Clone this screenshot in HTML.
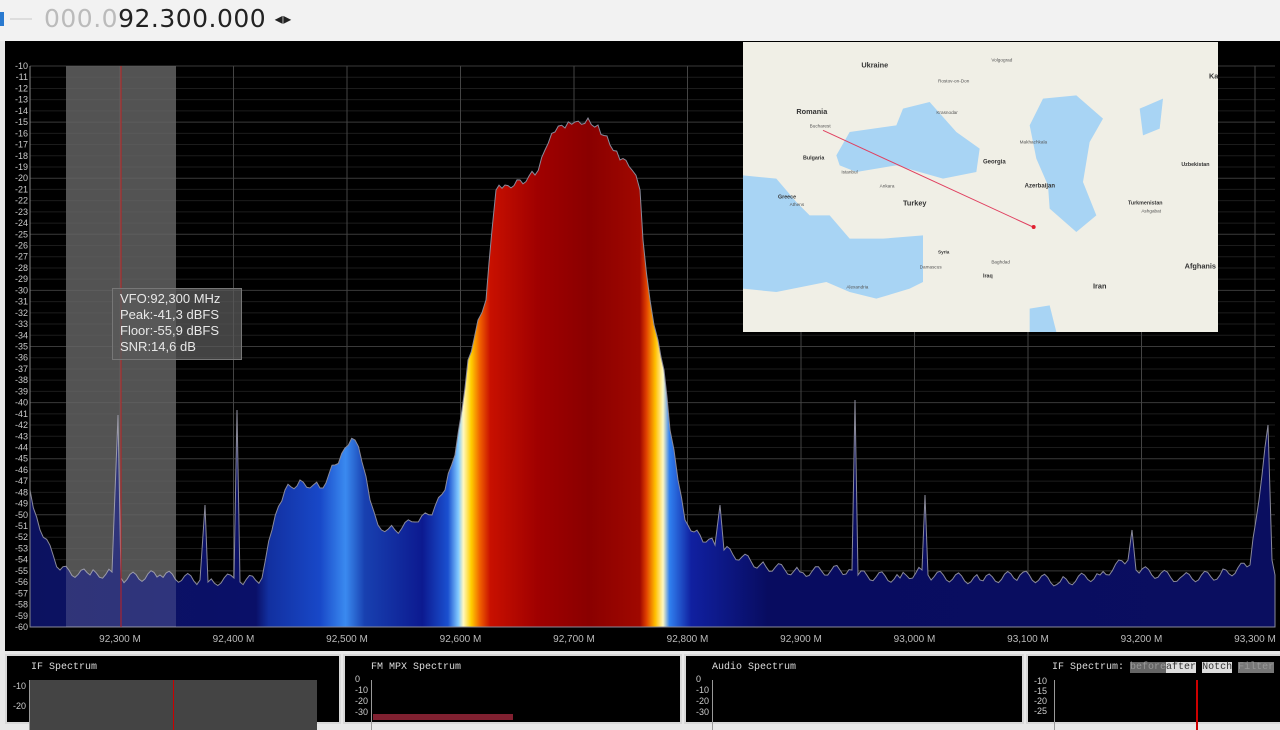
<!DOCTYPE html>
<html><head><meta charset="utf-8">
<style>
*{margin:0;padding:0;box-sizing:border-box}
body{width:1280px;height:720px;overflow:hidden;background:#e8e8e8;font-family:"Liberation Sans",sans-serif;position:relative}
.top{position:absolute;left:0;top:0;width:1280px;height:41px;background:#f2f2f2}
.freq{position:absolute;left:44px;top:4px;font-size:25px;letter-spacing:0.5px;color:#222;font-family:"DejaVu Sans","Liberation Sans",sans-serif}
.freq span{color:#bbb}
.main{position:absolute;left:5px;top:41px;width:1275px;height:610px;background:#000}
.panel{position:absolute;top:654px;height:70px;background:#000;border:2px solid #d8d8d8}
.ptitle{position:absolute;color:#ddd;font-family:"Liberation Mono",monospace;font-size:10px}
.tip{position:absolute;left:112px;top:288px;width:130px;height:72px;background:rgba(90,90,90,0.75);border:1px solid #777;color:#e8e8e8;font-size:13px;line-height:16px;padding:2px 7px}
.map{position:absolute;left:743px;top:42px;width:475px;height:290px}
</style></head><body>
<div class="top">
<div style="position:absolute;left:0;top:12px;width:4px;height:14px;background:#2a7ad0"></div>
<div style="position:absolute;left:10px;top:18px;width:22px;height:2px;background:#ddd"></div>
<div class="freq"><span>000.0</span>92.300.000 <b style="font-size:16px;vertical-align:3px">◂▸</b></div>
</div>
<div class="main"></div>
<svg style="position:absolute;left:0;top:0" width="1280" height="660">
<defs>
<linearGradient id="g" x1="0" x2="1280" gradientUnits="userSpaceOnUse">
<stop offset="0.02" stop-color="#0c1260"/>
<stop offset="0.2" stop-color="#0a1068"/>
<stop offset="0.21" stop-color="#1230a0"/>
<stop offset="0.25" stop-color="#1848c8"/>
<stop offset="0.27" stop-color="#3a8af0"/>
<stop offset="0.285" stop-color="#1840b0"/>
<stop offset="0.33" stop-color="#0c1a90"/>
<stop offset="0.35" stop-color="#1a50d0"/>
<stop offset="0.358" stop-color="#80c8ff"/>
<stop offset="0.362" stop-color="#fff8c0"/>
<stop offset="0.368" stop-color="#ffd000"/>
<stop offset="0.375" stop-color="#f06000"/>
<stop offset="0.383" stop-color="#c81000"/>
<stop offset="0.42" stop-color="#a00000"/>
<stop offset="0.46" stop-color="#8a0000"/>
<stop offset="0.5" stop-color="#a00800"/>
<stop offset="0.505" stop-color="#e04000"/>
<stop offset="0.512" stop-color="#ffc000"/>
<stop offset="0.518" stop-color="#fff8c0"/>
<stop offset="0.523" stop-color="#3080f0"/>
<stop offset="0.54" stop-color="#1020a0"/>
<stop offset="0.6" stop-color="#080c60"/>
<stop offset="1" stop-color="#0a0e60"/>
</linearGradient>
</defs>
<g id="grid" stroke="#3a3a3a" stroke-width="1"></g>
<rect x="66" y="66" width="110" height="561" fill="#444" opacity="0.8"/>
<polygon id="sp" fill="url(#g)" stroke="#8a8a9a" stroke-width="1"/>
<rect x="66" y="66" width="110" height="561" fill="#fff" opacity="0.15"/>
<line x1="121" y1="66" x2="121" y2="627" stroke="#c02020" stroke-width="1"/>
<line x1="30" y1="66" x2="30" y2="627" stroke="#888"/>
<g id="yl" fill="#ccc" font-size="9" text-anchor="end" font-family="Liberation Sans"></g>
<g id="xl" fill="#bbb" font-size="10" text-anchor="middle" font-family="Liberation Sans"></g>
</svg>
<div class="tip">VFO:92,300 MHz<br>Peak:-41,3 dBFS<br>Floor:-55,9 dBFS<br>SNR:14,6 dB</div>
<svg class="map" viewBox="0 0 1425 870" preserveAspectRatio="none">
<rect width="1425" height="870" fill="#f0efe6"/>
<polygon fill="#a8d4f4" points="280,340 320,270 460,250 480,200 560,180 640,270 710,320 700,390 600,410 460,370 340,390 290,370"/>
<polygon fill="#a8d4f4" points="860,250 900,170 1000,160 1080,230 1040,300 1020,420 1060,520 1000,570 920,500 915,430 880,350"/>
<polygon fill="#a8d4f4" points="0,400 100,410 160,480 200,520 260,520 320,590 420,590 540,580 540,720 500,740 400,770 320,750 250,720 100,750 0,740"/>
<polygon fill="#a8d4f4" points="860,800 920,790 940,870 860,870"/>
<polygon fill="#a8d4f4" points="1190,200 1260,170 1250,260 1200,280"/>
<g fill="#333" font-family="Liberation Sans" font-weight="bold" font-size="22">
<text x="355" y="76">Ukraine</text><text x="160" y="216">Romania</text><text x="480" y="490">Turkey</text>
<text x="1050" y="740">Iran</text><text x="1325" y="680">Afghanis</text><text x="1315" y="372" font-size="16">Uzbekistan</text>
<text x="1155" y="488" font-size="16">Turkmenistan</text><text x="720" y="365" font-size="18">Georgia</text>
<text x="845" y="437" font-size="18">Azerbaijan</text><text x="180" y="352" font-size="16">Bulgaria</text>
<text x="105" y="470" font-size="16">Greece</text><text x="585" y="635" font-size="14">Syria</text><text x="720" y="706" font-size="16">Iraq</text>
<text x="1398" y="110">Ka</text>
</g>
<g fill="#555" font-family="Liberation Sans" font-size="14">
<text x="745" y="58">Volgograd</text><text x="585" y="122">Rostov-on-Don</text><text x="580" y="216">Krasnodar</text>
<text x="830" y="305">Makhachkala</text><text x="295" y="395">Istanbul</text><text x="410" y="437">Ankara</text>
<text x="745" y="665">Baghdad</text><text x="310" y="740">Alexandria</text><text x="530" y="680">Damascus</text>
<text x="1195" y="512">Ashgabat</text><text x="200" y="257">Bucharest</text><text x="140" y="492">Athens</text>
</g>
<polyline points="240,265 870,555" stroke="#e04060" stroke-width="3" fill="none"/>
<circle cx="872" cy="555" r="6" fill="#e02030"/>
</svg>
<div class="panel" style="left:5px;width:336px"><div class="ptitle" style="left:24px;top:6px">IF Spectrum</div>
<div style="position:absolute;left:22px;top:24px;width:288px;height:50px;background:#444"></div>
<div style="position:absolute;left:166px;top:24px;width:1px;height:50px;background:#c00"></div>
<div style="position:absolute;left:22px;top:24px;width:1px;height:50px;background:#999"></div>
<div style="position:absolute;left:6px;top:20px;color:#ccc;font-size:9px;line-height:20px">-10<br>-20</div></div>
<div class="panel" style="left:343px;width:339px"><div class="ptitle" style="left:26px;top:6px">FM MPX Spectrum</div>
<div style="position:absolute;left:26px;top:24px;width:1px;height:50px;background:#999"></div>
<div style="position:absolute;left:10px;top:18px;color:#ccc;font-size:9px;line-height:11px">0<br>-10<br>-20<br>-30</div>
<div style="position:absolute;left:28px;top:58px;width:140px;height:6px;background:#802030"></div></div>
<div class="panel" style="left:684px;width:340px"><div class="ptitle" style="left:26px;top:6px">Audio Spectrum</div>
<div style="position:absolute;left:26px;top:24px;width:1px;height:50px;background:#999"></div>
<div style="position:absolute;left:10px;top:18px;color:#ccc;font-size:9px;line-height:11px">0<br>-10<br>-20<br>-30</div></div>
<div class="panel" style="left:1026px;width:260px"><div class="ptitle" style="left:24px;top:6px">IF Spectrum: <span style="background:#666;color:#999">before</span><span style="background:#ddd;color:#333">after</span> <span style="background:#ddd;color:#333">Notch</span> <span style="background:#777;color:#999">Filter</span></div>
<div style="position:absolute;left:26px;top:24px;width:1px;height:50px;background:#999"></div>
<div style="position:absolute;left:168px;top:24px;width:2px;height:50px;background:#c00"></div>
<div style="position:absolute;left:6px;top:20px;color:#ccc;font-size:9px;line-height:10px">-10<br>-15<br>-20<br>-25</div></div>
<script>
var ns="http://www.w3.org/2000/svg";
function el(p,t,a,tx){var e=document.createElementNS(ns,t);for(var k in a)e.setAttribute(k,a[k]);if(tx)e.textContent=tx;p.appendChild(e);}
var grid=document.getElementById('grid'),yl=document.getElementById('yl'),xl=document.getElementById('xl');
for(var d=10;d<=60;d++){var y=66+(d-10)*11.22;el(yl,'text',{x:28,y:y+3},'-'+d);el(grid,'line',{x1:30,x2:1275,y1:y,y2:y,stroke:(d%5==0?'#3a3a3a':'#1c1c1c')});}
for(var i=0;i<11;i++){var x=120+i*113.5;el(grid,'line',{x1:x,x2:x,y1:66,y2:627,stroke:'#444'});el(xl,'text',{x:x,y:642},(i<7?'92,'+(300+i*100):'93,'+String((i-7)*100).padStart(3,'0'))+' M');}
var pts=[[30,627],[30,490],[40,530],[60,570],[90,575],[112,572],[118,415],[121,578],[160,575],[200,580],[205,505],[208,582],[234,578],[237,410],[240,582],[262,578],[272,530],[285,490],[300,480],[320,488],[335,465],[345,448],[355,440],[362,462],[370,500],[378,525],[395,530],[415,522],[432,515],[445,490],[455,455],[462,410],[468,360],[478,320],[486,300],[492,230],[496,190],[505,185],[520,180],[535,175],[545,150],[555,132],[565,128],[575,122],[588,118],[598,125],[610,145],[620,160],[632,170],[640,190],[643,240],[650,300],[658,340],[664,370],[670,430],[678,480],[685,520],[700,535],[715,545],[720,505],[724,550],[760,565],[800,572],[840,570],[852,570],[855,400],[858,575],[900,578],[922,570],[925,495],[928,575],[980,580],[1020,575],[1060,582],[1100,575],[1128,560],[1132,530],[1136,570],[1180,578],[1220,575],[1250,565],[1268,425],[1272,560],[1275,575],[1275,627]];
var out=[];for(var j=0;j<pts.length-1;j++){var a=pts[j],b=pts[j+1];out.push(a);if(j>0&&j<pts.length-2){var n=Math.floor((b[0]-a[0])/3);for(var k=1;k<n;k++){var t=k/n;out.push([a[0]+(b[0]-a[0])*t,a[1]+(b[1]-a[1])*t+(Math.sin(k*7.3+j)*5)]);}}}
out.push(pts[pts.length-1]);
document.getElementById('sp').setAttribute('points',out.map(function(p){return p[0].toFixed(1)+','+p[1].toFixed(1)}).join(' '));
</script>
</body></html>
